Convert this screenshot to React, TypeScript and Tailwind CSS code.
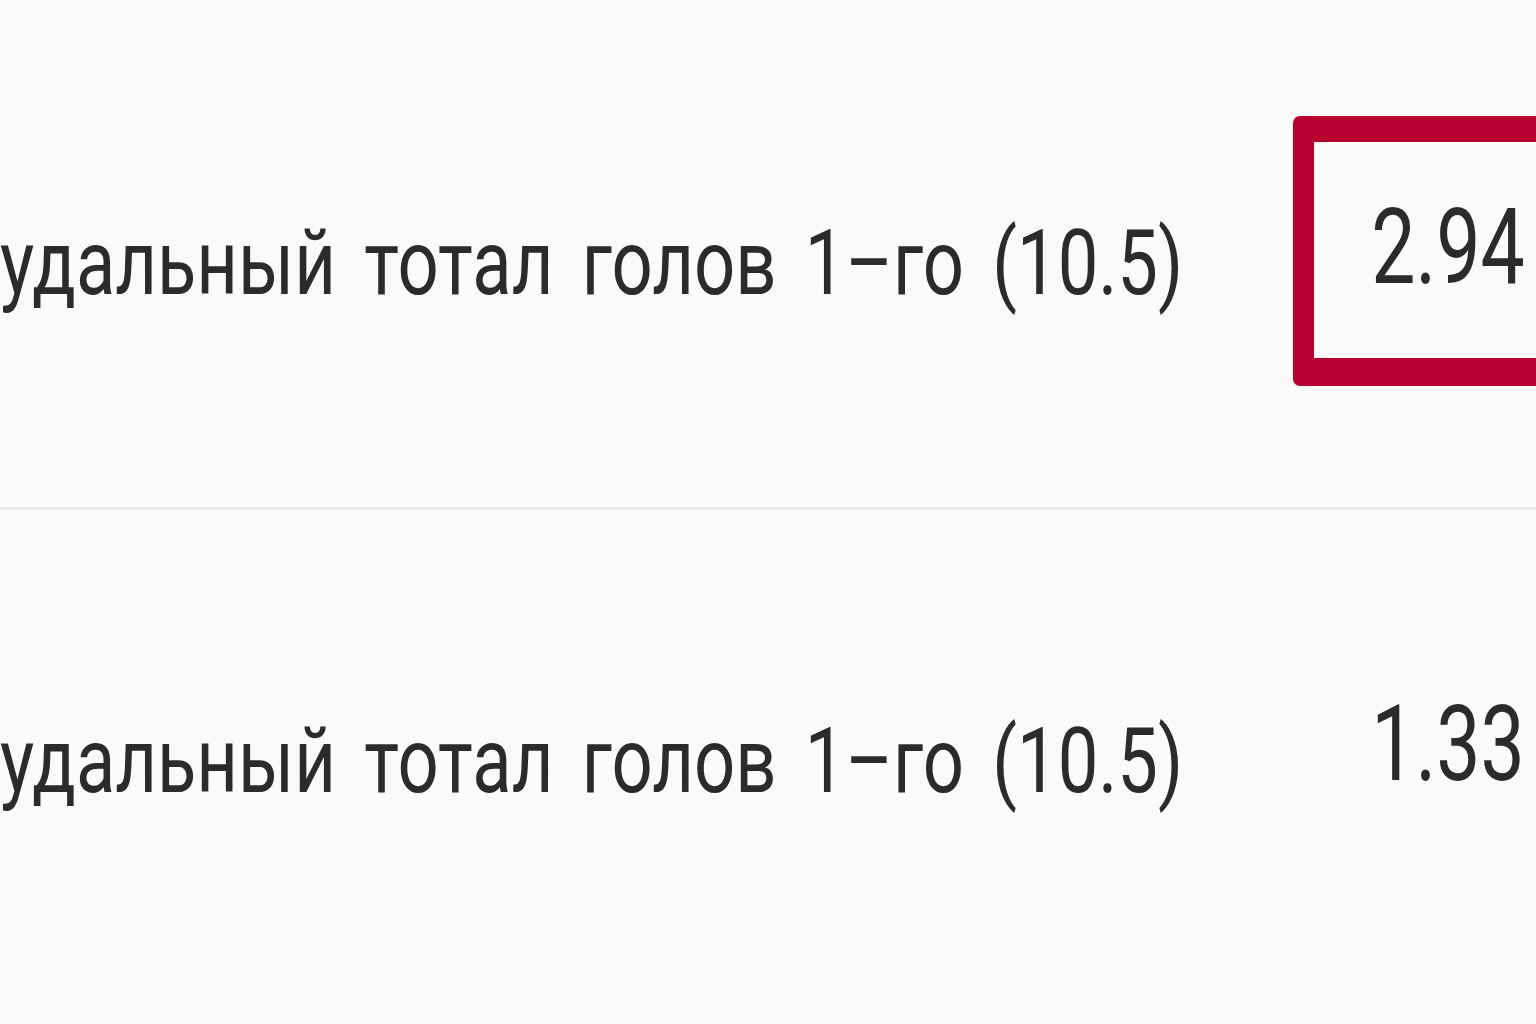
import React from "react";

const font = { fontFamily: "Roboto, 'Noto Sans', sans-serif" };

export default function App() {
  return (
    <div className="w-[1536px] h-[1024px] overflow-hidden bg-[#fafafa] text-[#2b2b2b]" style={font}>
      <div className="flex h-[507px] items-start">
        <div className="flex-1 min-w-0 pt-[218px]">
          <span className="inline-block whitespace-nowrap text-[91px] leading-none [word-spacing:13px] origin-left scale-x-[0.795]">
            удальный тотал голов 1–го (10.5)
          </span>
        </div>
        <div className="mt-[116px] -mr-[40px] w-[283px] shrink-0 rounded-[7px] border-solid border-[#b8002e] border-l-[21px] border-r-[21px] border-t-[26px] border-b-[28px] bg-[#fafafa] pt-[53px] pb-[58px] pr-[30px] text-right">
          <span className="inline-block whitespace-nowrap text-[105px] leading-none origin-right scale-x-[0.75]">2.94</span>
        </div>
      </div>
      <div className="h-[3px] bg-[#e9e9e9]" />
      <div className="flex h-[514px] items-start">
        <div className="flex-1 min-w-0 pt-[206px]">
          <span className="inline-block whitespace-nowrap text-[91px] leading-none [word-spacing:13px] origin-left scale-x-[0.795]">
            удальный тотал голов 1–го (10.5)
          </span>
        </div>
        <div className="mt-[182px] w-[243px] shrink-0 pr-[11px] text-right">
          <span className="inline-block whitespace-nowrap text-[105px] leading-none origin-right scale-x-[0.75]">1.33</span>
        </div>
      </div>
    </div>
  );
}
